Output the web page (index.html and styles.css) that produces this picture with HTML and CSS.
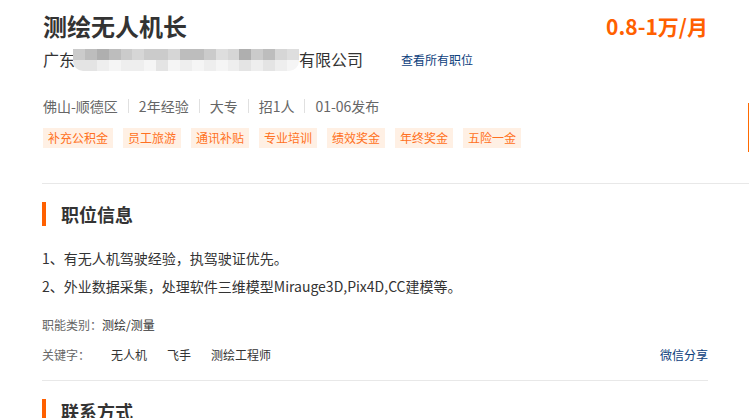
FILE: index.html
```html
<!DOCTYPE html>
<html lang="zh-CN">
<head>
<meta charset="utf-8">
<title>测绘无人机长</title>
<link rel="stylesheet" href="styles.css">
</head>
<body>
<div class="page">
  <div class="header">
    <div class="header-inner">
      <div class="title-row">
        <h1 class="job-title">测绘无人机长</h1>
        <div class="salary">0.8-1万/月</div>
      </div>
      <div class="company-row">
        <span class="company">广东<span class="mosaic"><span class="m-row top"><i class="a"></i><i class="b"></i><i class="c"></i><i class="b"></i><i class="a"></i><i class="d"></i><i class="a"></i><i class="a"></i><i class="d"></i><i class="b"></i><i class="b"></i><i class="a"></i><i class="e"></i><i class="d"></i><i class="c"></i><i class="a"></i><i class="b"></i><i class="d"></i><i class="e"></i></span><span class="m-row bottom"><i class="f"></i><i class="f"></i><i class="g"></i><i class="h"></i><i class="g"></i><i class="g"></i><i class="h"></i><i class="f"></i><i class="h"></i><i class="g"></i><i class="h"></i><i class="g"></i><i class="h"></i><i class="g"></i><i class="f"></i><i class="g"></i><i class="f"></i><i class="g"></i><i class="h"></i></span></span>有限公司</span>
        <a class="all-jobs" href="#">查看所有职位</a>
      </div>
      <div class="meta">
        <span>佛山-顺德区</span><span class="sep"></span><span>2年经验</span><span class="sep"></span><span>大专</span><span class="sep"></span><span>招1人</span><span class="sep"></span><span>01-06发布</span>
      </div>
      <div class="tags">
        <span class="tag">补充公积金</span><span class="tag">员工旅游</span><span class="tag">通讯补贴</span><span class="tag">专业培训</span><span class="tag">绩效奖金</span><span class="tag">年终奖金</span><span class="tag">五险一金</span>
      </div>
    </div>
    <div class="side-edge"></div>
  </div>

  <div class="section">
    <h2 class="section-title">职位信息</h2>
    <div class="desc">
      <p>1、有无人机驾驶经验，执驾驶证优先。</p>
      <p>2、外业数据采集，处理软件三维模型Mirauge3D,Pix4D,CC建模等。</p>
    </div>
    <div class="fn-row"><span class="label">职能类别：</span><a class="fn-link" href="#">测绘/测量</a></div>
    <div class="kw-row">
      <div class="kws"><span class="label kw-label">关键字：</span><a href="#">无人机</a><a href="#">飞手</a><a href="#">测绘工程师</a></div>
      <a class="share" href="#">微信分享</a>
    </div>
  </div>

  <div class="section">
    <h2 class="section-title">联系方式</h2>
  </div>
</div>
</body>
</html>
```

FILE: styles.css
```css
* { box-sizing: border-box; }
html, body { margin: 0; padding: 0; background: #fff; }
body {
  font-family: "Microsoft YaHei", "Noto Sans CJK SC", "Noto Sans", sans-serif;
  color: #333;
  overflow: hidden;
}
a { text-decoration: none; }
.page { padding-left: 42px; width: 749px; }

.header {
  position: relative;
  padding-top: 9px;
  padding-bottom: 35px;
  border-bottom: 1px solid #e8e8e8;
}
.header-inner { width: 666px; padding-left: 1px; }
.title-row { display: flex; justify-content: space-between; align-items: flex-start; }
.job-title { margin: 0; font-size: 24px; line-height: 34px; font-weight: bold; color: #333; }
.salary { font-size: 21px; line-height: 34px; font-weight: bold; color: #ff6000; }

.company-row { margin-top: 4px; display: flex; align-items: center; height: 24px; }
.company { font-size: 16px; line-height: 24px; color: #333; display: inline-flex; align-items: center; }
.mosaic {
  display: inline-flex; flex-direction: column;
  width: 226px; height: 22px; margin: 2px 0 0 -2px;
  border-radius: 0 0 10px 10px; overflow: hidden;
}
.m-row { display: flex; height: 11px; }
.m-row i { flex: 1; display: block; }
.m-row .a { background: #cbcbcb; }
.m-row .b { background: #bdbdbd; }
.m-row .c { background: #afafaf; }
.m-row .d { background: #d6d6d6; }
.m-row .e { background: #dedede; }
.m-row .f { background: #e4e4e4; }
.m-row .g { background: #eeeeee; }
.m-row .h { background: #f5f5f5; }
.all-jobs { margin-left: 38px; font-size: 12px; line-height: 24px; color: #0c3e7c; padding-top: 2px; }

.meta { margin-top: 25px; font-size: 14px; line-height: 20px; color: #666; display: flex; align-items: center; }
.sep { display: inline-block; width: 1px; height: 14px; background: #e0e0e0; margin: 0 10px; }

.tags { margin-top: 12px; display: flex; }
.tag {
  height: 20px; line-height: 20px; padding: 0 5px; margin-right: 10px;
  font-size: 12px; color: #ff7022; background: #fff0e4;
}

.side-edge { position: absolute; left: 706px; top: 103px; width: 2px; height: 49px; background: #ff6a00; }

.section { width: 666px; }
.section + .section { border-top: 1px solid #e8e8e8; }
.section-title {
  margin: 18px 0 0; font-size: 18px; line-height: 24px; font-weight: bold; color: #333;
  border-left: 4px solid #ff6000; padding-left: 15px;
}
.desc { margin-top: 18px; font-size: 14px; line-height: 28px; color: #333; }
.desc p { margin: 0; }
.fn-row { margin-top: 15px; font-size: 12px; line-height: 20px; }
.label { color: #666; }
.fn-link { color: #333; }
.kw-row { margin-top: 10px; padding-bottom: 15px; display: flex; justify-content: space-between; font-size: 12px; line-height: 20px; }
.kws { display: flex; }
.kws a { color: #333; margin-left: 20px; }
.kw-label { margin-right: 1px; }
.share { color: #0c3e7c; }
```
